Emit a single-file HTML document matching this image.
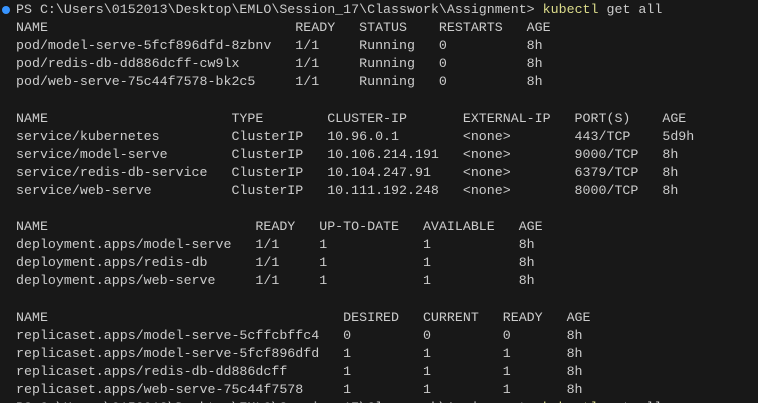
<!DOCTYPE html>
<html><head><meta charset="utf-8"><style>
html,body{margin:0;padding:0;background:#181818;width:758px;height:403px;overflow:hidden}
#w{position:relative;width:758px;height:403px;overflow:hidden}
pre{position:absolute;left:16px;top:1px;margin:0;font-family:"Liberation Mono",monospace;font-size:13.3px;line-height:18.1px;color:#cccccc;white-space:pre}
.k{color:#dcdc8b}
.dot{position:absolute;left:2px;top:6px;width:8px;height:8px;border-radius:50%;background:#3794ff}
.dot2{position:absolute;left:2px;top:403px;width:8px;height:8px;border-radius:50%;background:#3794ff}
</style></head><body><div id="w">
<div class="dot"></div><div class="dot2"></div>
<pre>PS C:\Users\0152013\Desktop\EMLO\Session_17\Classwork\Assignment> <span class="k">kubectl</span> get all
NAME                               READY   STATUS    RESTARTS   AGE
pod/model-serve-5fcf896dfd-8zbnv   1/1     Running   0          8h
pod/redis-db-dd886dcff-cw9lx       1/1     Running   0          8h
pod/web-serve-75c44f7578-bk2c5     1/1     Running   0          8h

NAME                       TYPE        CLUSTER-IP       EXTERNAL-IP   PORT(S)    AGE
service/kubernetes         ClusterIP   10.96.0.1        &lt;none&gt;        443/TCP    5d9h
service/model-serve        ClusterIP   10.106.214.191   &lt;none&gt;        9000/TCP   8h
service/redis-db-service   ClusterIP   10.104.247.91    &lt;none&gt;        6379/TCP   8h
service/web-serve          ClusterIP   10.111.192.248   &lt;none&gt;        8000/TCP   8h

NAME                          READY   UP-TO-DATE   AVAILABLE   AGE
deployment.apps/model-serve   1/1     1            1           8h
deployment.apps/redis-db      1/1     1            1           8h
deployment.apps/web-serve     1/1     1            1           8h

NAME                                     DESIRED   CURRENT   READY   AGE
replicaset.apps/model-serve-5cffcbffc4   0         0         0       8h
replicaset.apps/model-serve-5fcf896dfd   1         1         1       8h
replicaset.apps/redis-db-dd886dcff       1         1         1       8h
replicaset.apps/web-serve-75c44f7578     1         1         1       8h
PS C:\Users\0152013\Desktop\EMLO\Session_17\Classwork\Assignment> <span class="k">kubectl</span> get all</pre>
</div></body></html>
